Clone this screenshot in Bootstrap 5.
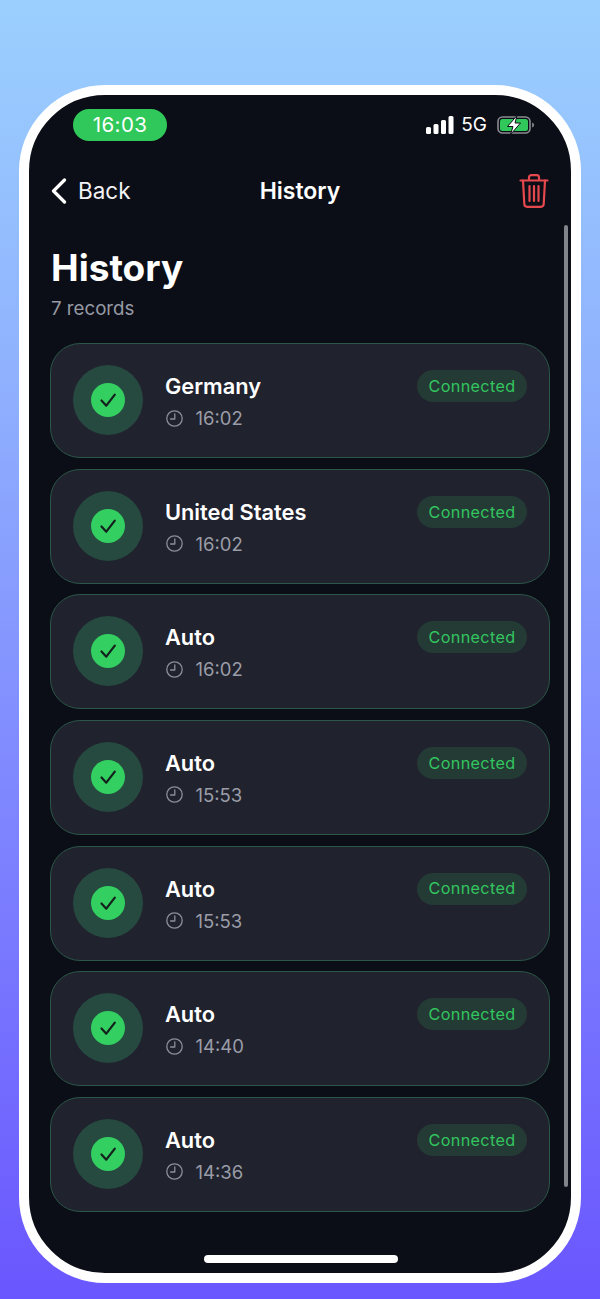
<!DOCTYPE html>
<html lang="en">
  <head>
    <meta charset="UTF-8" />
    <meta name="viewport" content="width=device-width, initial-scale=1.0" />
    <title>History</title>
    <link
      href="https://cdn.jsdelivr.net/npm/bootstrap@5.3.0/dist/css/bootstrap.min.css"
      rel="stylesheet"
    />
    <style>
      html,
      body {
        height: 100%;
      }
      body {
        background: linear-gradient(180deg, #9bd0fe 0%, #8fb0fe 30%, #7d82ff 65%, #6a56fe 100%);
        font-family: Inter, "Liberation Sans", sans-serif;
        overflow: hidden;
      }
      .stage {
        padding: 85px 19px 16px;
      }
      .phone {
        position: relative;
        height: 1198px;
        background: #0c0e17;
        border: 10px solid #fff;
        border-radius: 86px;
        color: #fff;
        overflow: hidden;
      }
      .status-row {
        height: 32px;
        margin-top: 14px;
        padding: 0 36px 0 44px;
      }
      .clock-pill {
        width: 94px;
        height: 32px;
        background: #30c85a;
        border-radius: 16px;
        font-size: 20.5px;
        letter-spacing: 0.4px;
      }
      .net-label {
        font-size: 19px;
        margin: 0 10px 0 7px;
      }
      .top-bar {
        height: 44px;
        margin-top: 28px;
        padding: 0 22px;
        position: relative;
      }
      .back-link {
        font-size: 22.5px;
        gap: 11px;
        color: #f2f3f6;
      }
      .bar-title {
        position: absolute;
        left: 0;
        right: 0;
        text-align: center;
        font-size: 23px;
        font-weight: 600;
      }
      .head-block {
        padding: 33px 22px 0;
      }
      .page-title {
        font-size: 37px;
        line-height: 44px;
        font-weight: 700;
        margin: 0;
      }
      .record-count {
        font-size: 18.7px;
        line-height: 24px;
        margin-top: 7px;
        color: #969aa4;
      }
      .record-list {
        padding: 22px 21px 0;
        gap: 10.67px;
      }
      .record-card {
        height: 115px;
        background: #20222e;
        border: 1px solid #2a5747;
        border-radius: 30px;
        padding: 21px 22px 0;
      }
      .halo {
        width: 70px;
        height: 70px;
        background: #264a40;
        border-radius: 50%;
      }
      .info-block {
        margin-left: 22px;
      }
      .place-name {
        font-size: 21.8px;
        line-height: 26px;
        font-weight: 600;
        margin-top: 8px;
      }
      .time-row {
        color: #9a9da7;
        font-size: 18.5px;
        line-height: 24px;
        gap: 12.5px;
        margin-top: 7px;
      }
      .time-row svg {
        margin-left: 1px;
      }
      .state-pill {
        height: 32px;
        width: 110px;
        margin-top: 5px;
        background: #243a35;
        color: #33c55f;
        border-radius: 16px;
        font-size: 16.2px;
        letter-spacing: 0.35px;
      }
      .scroll-thumb {
        position: absolute;
        top: 130px;
        right: 3px;
        width: 4px;
        height: 962px;
        background: #82848b;
        border-radius: 2px;
      }
      .home-bar {
        position: absolute;
        left: 175px;
        bottom: 10px;
        width: 194px;
        height: 8px;
        background: #fff;
        border-radius: 4px;
      }
    </style>
  </head>
  <body>
    <div class="stage">
      <div class="phone">
        <div class="status-row d-flex align-items-center justify-content-between">
          <div class="clock-pill d-flex align-items-center justify-content-center">16:03</div>
          <div class="d-flex align-items-center">
            <svg width="28" height="18" viewBox="0 0 28 18" fill="#fff">
              <rect x="0" y="11" width="5" height="7" rx="1.5" />
              <rect x="7.5" y="8" width="5" height="10" rx="1.5" />
              <rect x="15" y="4" width="5" height="14" rx="1.5" />
              <rect x="22.5" y="0" width="5" height="18" rx="1.5" />
            </svg>
            <span class="net-label">5G</span>
            <svg width="38" height="20" viewBox="0 0 38 20">
              <rect x="1" y="2" width="32" height="16" rx="4.5" fill="none" stroke="#8a8c90" stroke-width="1.6" />
              <rect x="3" y="4" width="28" height="12" rx="2.5" fill="#30c85a" />
              <path d="M35 7.5c1.5.4 2.2 1.4 2.2 2.5s-.7 2.1-2.2 2.5z" fill="#77797d" />
              <path d="M20 0.5 10.5 11.5h5.5L13.5 19.5 23.5 8h-5.5z" fill="#fff" stroke="#0c0e17" stroke-width="1" />
            </svg>
          </div>
        </div>

        <div class="top-bar d-flex align-items-center justify-content-between">
          <div class="back-link d-flex align-items-center">
            <svg width="16" height="26" viewBox="0 0 16 26" fill="none" stroke="#fff" stroke-width="3.2" stroke-linecap="round" stroke-linejoin="round">
              <path d="M13.5 2 2.5 13l11 11" />
            </svg>
            <span>Back</span>
          </div>
          <div class="bar-title">History</div>
          <svg width="30" height="34" viewBox="0 0 30 34" fill="none" stroke="#e5484d" stroke-width="2.2" stroke-linecap="round" stroke-linejoin="round">
            <path d="M1.5 6.5h27" />
            <path d="M10 6V3.5C10 2 11 1.2 12.3 1.2h5.4C19 1.2 20 2 20 3.5V6" />
            <path d="M4 6.5l1.3 23.5c.1 1.6 1.2 2.8 2.8 2.8h13.8c1.6 0 2.7-1.2 2.8-2.8L26 6.5" />
            <path d="M10.5 12v15M15 12v15M19.5 12v15" />
          </svg>
        </div>

        <div class="head-block">
          <h1 class="page-title">History</h1>
          <div class="record-count">7 records</div>
        </div>

        <div class="record-list d-flex flex-column" id="records"></div>

        <div class="scroll-thumb"></div>
        <div class="home-bar"></div>
      </div>
    </div>

    <script>
      const records = [
        { place: "Germany", time: "16:02" },
        { place: "United States", time: "16:02" },
        { place: "Auto", time: "16:02" },
        { place: "Auto", time: "15:53" },
        { place: "Auto", time: "15:53" },
        { place: "Auto", time: "14:40" },
        { place: "Auto", time: "14:36" },
      ];

      document.getElementById("records").innerHTML = records
        .map(
          (r) => `
          <div class="record-card d-flex align-items-start">
            <div class="halo d-flex align-items-center justify-content-center flex-shrink-0">
              <svg width="34" height="34" viewBox="0 0 34 34">
                <circle cx="17" cy="17" r="17" fill="#33cf61" />
                <path d="M10.5 17.5l4.8 5.2 8.5-11" fill="none" stroke="#14201c" stroke-width="2.2" stroke-linecap="round" stroke-linejoin="round" />
              </svg>
            </div>
            <div class="info-block flex-grow-1">
              <div class="place-name">${r.place}</div>
              <div class="time-row d-flex align-items-center">
                <svg width="17" height="17" viewBox="0 0 17 17" fill="none" stroke="#8c8f9a" stroke-width="1.3" stroke-linecap="round" stroke-linejoin="round">
                  <circle cx="8.5" cy="8.5" r="7.7" />
                  <path d="M8.8 3.8v5.2H4.6" />
                </svg>
                <span>${r.time}</span>
              </div>
            </div>
            <div class="state-pill d-flex align-items-center justify-content-center">Connected</div>
          </div>`
        )
        .join("");
    </script>
    <script src="https://cdn.jsdelivr.net/npm/bootstrap@5.3.0/dist/js/bootstrap.bundle.min.js"></script>
  </body>
</html>
